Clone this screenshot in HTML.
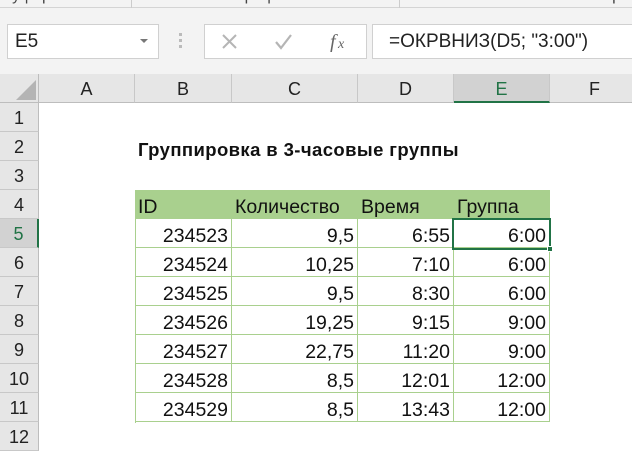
<!DOCTYPE html>
<html><head><meta charset="utf-8"><style>
*{margin:0;padding:0;box-sizing:border-box}
body{width:632px;height:455px;overflow:hidden;background:#fff;font-family:"Liberation Sans","Noto Sans CJK SC",sans-serif;position:relative}
.a{position:absolute}
.top{left:0;top:0;width:632px;height:74px;background:#f3f3f3}
.rib{left:0;top:0;width:632px;height:8px;border-bottom:1px solid #d4d4d4;background:#f3f3f3;font-size:16px;color:#444;line-height:0px;overflow:hidden}
.box{background:#fff;border:1px solid #d0d0d0}
.ch{top:74px;height:29px;background:#e6e6e6;border-right:1px solid #c8c8c8;border-bottom:1px solid #bdbdbd;font-size:18px;text-align:center;line-height:30px;color:#222}
.rh{left:0;width:39px;height:29px;background:#e6e6e6;border-bottom:1px solid #c8c8c8;border-right:1px solid #bdbdbd;font-size:18px;text-align:center;line-height:31px;color:#222}
.c{height:29px;font-size:19.5px;line-height:34px;color:#111;padding:0 3px;white-space:nowrap;border-right:1px solid #a9d08e;border-bottom:1px solid #a9d08e;text-align:right}
.h{background:#a9d08e;text-align:left;border:none}
</style></head><body>
<div class="a top"></div>
<div class="a rib"><span style="position:absolute;left:2px;top:-4px">Буфер обмена</span><span style="position:absolute;left:230px;top:-4px">Шрифт</span><span style="position:absolute;left:590px;top:-4px">Выра</span></div>
<div class="a" style="left:131px;top:0;width:1px;height:8px;background:#ccc"></div>
<div class="a" style="left:399px;top:0;width:1px;height:8px;background:#ccc"></div>
<div class="a box" style="left:7px;top:24px;width:152px;height:35px"></div>
<div class="a" style="left:15px;top:31px;font-size:19px;color:#222">E5</div>
<div class="a" style="left:140px;top:39px;width:0;height:0;border-left:4px solid transparent;border-right:4px solid transparent;border-top:4px solid #777"></div>
<div class="a" style="left:179px;top:33px;width:3px;height:3px;background:#bbb;box-shadow:0 6px 0 #bbb,0 12px 0 #bbb"></div>
<div class="a box" style="left:204px;top:24px;width:163px;height:35px"></div>
<svg class="a" style="left:220px;top:32px" width="140" height="20"><path d="M3 3L16 16M16 3L3 16" stroke="#b5b5b5" stroke-width="2"/><path d="M56 10l5 6 10-13" stroke="#b5b5b5" stroke-width="2.2" fill="none"/><text x="110" y="16" font-family="Liberation Serif" font-style="italic" font-size="20" fill="#666">f</text><text x="118" y="16" font-family="Liberation Serif" font-style="italic" font-size="14" fill="#666">x</text></svg>
<div class="a box" style="left:372px;top:24px;width:262px;height:35px"></div>
<div class="a" style="left:389px;top:31px;font-size:19px;color:#222">=ОКРВНИЗ(D5; "3:00")</div>
<div class="a" style="left:0;top:74px;width:39px;height:29px;background:#e6e6e6;border-right:1px solid #bdbdbd;border-bottom:1px solid #bdbdbd"></div>
<div class="a" style="left:16px;top:80px;width:0;height:0;border-left:20px solid transparent;border-bottom:20px solid #b4b4b4"></div>
<div class="a ch" style="left:39px;width:96px">A</div>
<div class="a ch" style="left:135px;width:97px">B</div>
<div class="a ch" style="left:232px;width:126px">C</div>
<div class="a ch" style="left:358px;width:96px">D</div>
<div class="a ch" style="left:454px;width:96px;background:#d2d2d2;color:#217346;border-bottom:2px solid #217346">E</div>
<div class="a ch" style="left:550px;width:90px">F</div>
<div class="a rh" style="top:103px">1</div>
<div class="a rh" style="top:132px">2</div>
<div class="a rh" style="top:161px">3</div>
<div class="a rh" style="top:190px">4</div>
<div class="a rh" style="top:219px;background:#d2d2d2;color:#217346;border-right:2px solid #217346">5</div>
<div class="a rh" style="top:248px">6</div>
<div class="a rh" style="top:277px">7</div>
<div class="a rh" style="top:306px">8</div>
<div class="a rh" style="top:335px">9</div>
<div class="a rh" style="top:364px">10</div>
<div class="a rh" style="top:393px">11</div>
<div class="a rh" style="top:422px">12</div>
<div class="a" style="left:138px;top:139px;font-size:18.5px;font-weight:bold;color:#111;letter-spacing:0.4px">Группировка в 3-часовые группы</div>
<div class="a" style="left:135px;top:190px;width:415px;height:29px;background:#a9d08e"></div>
<div class="a c h" style="left:135px;top:190px;width:97px">ID</div>
<div class="a c h" style="left:232px;top:190px;width:126px">Количество</div>
<div class="a c h" style="left:358px;top:190px;width:96px">Время</div>
<div class="a c h" style="left:454px;top:190px;width:96px">Группа</div>
<div class="a" style="left:135px;top:219px;width:1px;height:204px;background:#a9d08e"></div>
<div class="a c" style="left:135px;top:219px;width:97px">234523</div><div class="a c" style="left:232px;top:219px;width:126px">9,5</div><div class="a c" style="left:358px;top:219px;width:96px">6:55</div><div class="a c" style="left:454px;top:219px;width:96px">6:00</div>
<div class="a c" style="left:135px;top:248px;width:97px">234524</div><div class="a c" style="left:232px;top:248px;width:126px">10,25</div><div class="a c" style="left:358px;top:248px;width:96px">7:10</div><div class="a c" style="left:454px;top:248px;width:96px">6:00</div>
<div class="a c" style="left:135px;top:277px;width:97px">234525</div><div class="a c" style="left:232px;top:277px;width:126px">9,5</div><div class="a c" style="left:358px;top:277px;width:96px">8:30</div><div class="a c" style="left:454px;top:277px;width:96px">6:00</div>
<div class="a c" style="left:135px;top:306px;width:97px">234526</div><div class="a c" style="left:232px;top:306px;width:126px">19,25</div><div class="a c" style="left:358px;top:306px;width:96px">9:15</div><div class="a c" style="left:454px;top:306px;width:96px">9:00</div>
<div class="a c" style="left:135px;top:335px;width:97px">234527</div><div class="a c" style="left:232px;top:335px;width:126px">22,75</div><div class="a c" style="left:358px;top:335px;width:96px">11:20</div><div class="a c" style="left:454px;top:335px;width:96px">9:00</div>
<div class="a c" style="left:135px;top:364px;width:97px">234528</div><div class="a c" style="left:232px;top:364px;width:126px">8,5</div><div class="a c" style="left:358px;top:364px;width:96px">12:01</div><div class="a c" style="left:454px;top:364px;width:96px">12:00</div>
<div class="a c" style="left:135px;top:393px;width:97px">234529</div><div class="a c" style="left:232px;top:393px;width:126px">8,5</div><div class="a c" style="left:358px;top:393px;width:96px">13:43</div><div class="a c" style="left:454px;top:393px;width:96px">12:00</div>
<div class="a" style="left:452px;top:218px;width:99px;height:32px;border:2px solid #217346"></div>
<div class="a" style="left:547px;top:246px;width:6px;height:6px;background:#217346;border:1px solid #fff"></div>
</body></html>
